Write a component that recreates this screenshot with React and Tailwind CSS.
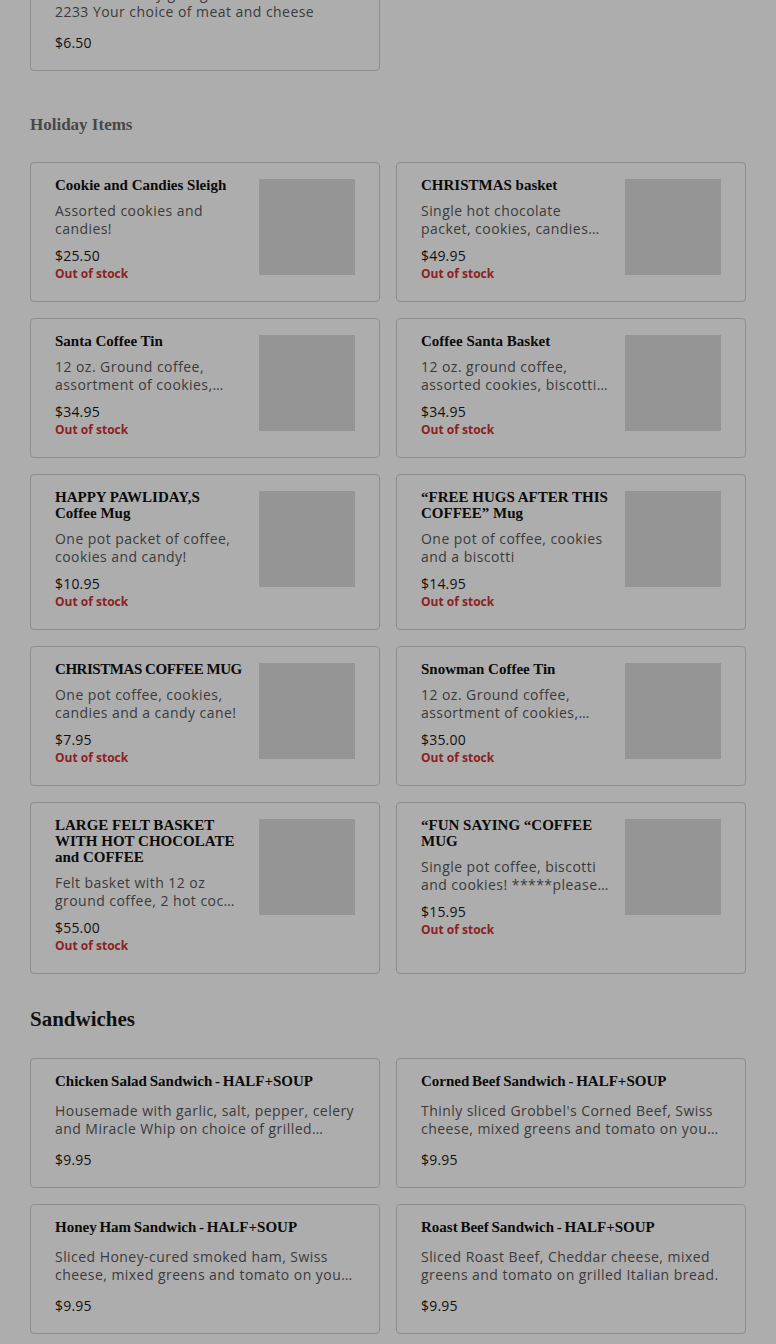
import React from "react";

const serif = { fontFamily: '"Liberation Serif", "DejaVu Serif", serif' };
const sans = { fontFamily: '"Open Sans", "Liberation Sans", sans-serif' };

const holiday = [
  { t: "Cookie and Candies Sleigh", d: "Assorted cookies and candies!", p: "$25.50" },
  { t: "CHRISTMAS basket", d: "Single hot chocolate packet, cookies, candies and a candy cane", p: "$49.95" },
  { t: "Santa Coffee Tin", d: "12 oz. Ground coffee, assortment of cookies, candies and biscotti", p: "$34.95" },
  { t: "Coffee Santa Basket", d: "12 oz. ground coffee, assorted cookies, biscotti and candies", p: "$34.95" },
  { t: "HAPPY PAWLIDAY,S Coffee Mug", d: "One pot packet of coffee, cookies and candy!", p: "$10.95" },
  { t: "\u201CFREE HUGS AFTER THIS COFFEE\u201D Mug", d: "One pot of coffee, cookies and a biscotti", p: "$14.95" },
  { t: "CHRISTMAS COFFEE MUG", d: "One pot coffee, cookies, candies and a candy cane!", p: "$7.95", tight: true },
  { t: "Snowman Coffee Tin", d: "12 oz. Ground coffee, assortment of cookies, candies and biscotti", p: "$35.00" },
  { t: "LARGE FELT BASKET WITH HOT CHOCOLATE and COFFEE", d: "Felt basket with 12 oz ground coffee, 2 hot cocoa packets, cookies and candies", p: "$55.00" },
  { t: "\u201CFUN SAYING \u201CCOFFEE MUG", d: "Single pot coffee, biscotti and cookies! *****please call to choose your saying", p: "$15.95" },
];

const sandwiches = [
  { t: "Chicken Salad Sandwich - HALF+SOUP", d: "Housemade with garlic, salt, pepper, celery and Miracle Whip on choice of grilled bread.", p: "$9.95" },
  { t: "Corned Beef Sandwich - HALF+SOUP", d: "Thinly sliced Grobbel's Corned Beef, Swiss cheese, mixed greens and tomato on your choice of grilled bread.", p: "$9.95" },
  { t: "Honey Ham Sandwich - HALF+SOUP", d: "Sliced Honey-cured smoked ham, Swiss cheese, mixed greens and tomato on your choice of grilled bread.", p: "$9.95" },
  { t: "Roast Beef Sandwich - HALF+SOUP", d: "Sliced Roast Beef, Cheddar cheese, mixed greens and tomato on grilled Italian bread.", p: "$9.95" },
];

function HolidayCard({ item }) {
  return (
    <div className="flex gap-4 rounded border border-[#8e8e8e] bg-[#adadad] px-6 pt-[14px] pb-[19px]">
      <div className="min-w-0 flex-1">
        <div
          className={
            item.tight
              ? "text-[15px] leading-4 font-bold tracking-[-0.45px] text-[#0b0b0b]"
              : "text-[15px] leading-4 font-bold text-[#0b0b0b]"
          }
          style={serif}
        >
          {item.t}
        </div>
        <div className="mt-[9px] line-clamp-2 text-[14px] leading-[18px] tracking-[0.45px] text-[#3b3b3b]" style={sans}>{item.d}</div>
        <div className="mt-2 text-[14px] leading-5 tracking-[0.2px] text-[#111]" style={sans}>{item.p}</div>
        <div className="text-[12px] leading-4 font-bold text-[#8a2222]" style={sans}>Out of stock</div>
      </div>
      <div className="mt-[2px] h-24 w-24 shrink-0 bg-[#959595]" />
    </div>
  );
}

function SandwichCard({ item }) {
  return (
    <div className="rounded border border-[#8e8e8e] bg-[#adadad] px-6 pt-[14px] pb-[17px]">
      <div className="text-[15px] leading-4 font-bold text-[#0b0b0b] [word-spacing:-1px]" style={serif}>{item.t}</div>
      <div className="mt-[13px] line-clamp-2 text-[14px] leading-[18px] tracking-[0.45px] text-[#3b3b3b]" style={sans}>{item.d}</div>
      <div className="mt-3 text-[14px] leading-5 tracking-[0.2px] text-[#111]" style={sans}>{item.p}</div>
    </div>
  );
}

export default function App() {
  return (
    <div className="min-h-[1344px] overflow-hidden bg-[#adadad] px-[30px] pb-10">
      <div className="-mt-[59px] grid grid-cols-2 gap-4">
        <SandwichCard item={{ t: "Build Your Own Sandwich - HALF", d: "Order ahead by giving us a call at 616-555-2233 Your choice of meat and cheese", p: "$6.50" }} />
      </div>

      <h2 className="mt-[40px] text-[17px] leading-7 font-bold text-[#474747]" style={serif}>Holiday Items</h2>
      <div className="mt-[23px] grid grid-cols-2 gap-4">
        {holiday.map((it, i) => (
          <HolidayCard key={i} item={it} />
        ))}
      </div>

      <h2 className="mt-[31px] text-[21px] leading-7 font-bold text-[#111]" style={serif}>Sandwiches</h2>
      <div className="mt-[25px] grid grid-cols-2 gap-4">
        {sandwiches.map((it, i) => (
          <SandwichCard key={i} item={it} />
        ))}
      </div>
    </div>
  );
}
